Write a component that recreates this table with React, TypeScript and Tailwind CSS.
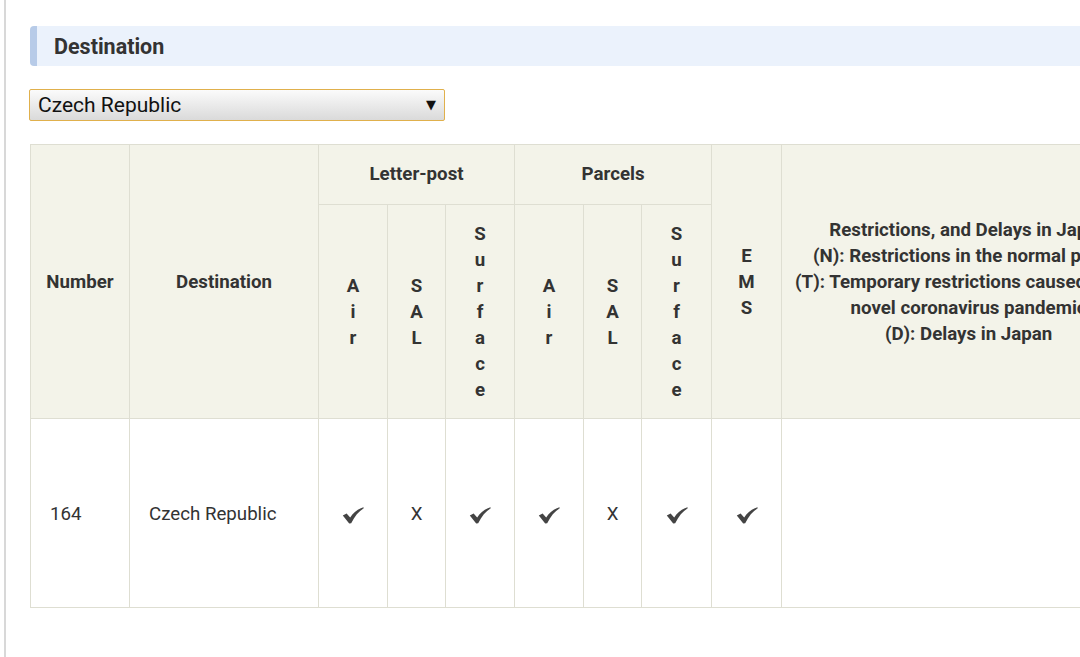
import React from "react";

const Vert = ({ t }: { t: string }) => (
  <div className="flex flex-col items-center leading-[26px]">
    {t.split("").map((c, i) => (
      <span key={i}>{c}</span>
    ))}
  </div>
);

const Check = () => (
  <svg width="22" height="18" viewBox="0 0 22 18" className="inline-block align-middle">
    <path
      d="M0.8 9.6 L4.6 7.4 L8.2 11.6 C11.2 6.8 15.4 3.2 21.4 1.2 L21.8 2.2 C16.6 5.2 12.6 10.2 9.2 17.2 L7.2 17.4 Z"
      fill="#444"
    />
  </svg>
);

const X = () => <span>X</span>;

export default function App() {
  const th = "border border-[#deded2] bg-[#f3f3e9] font-bold text-center align-middle p-0";
  const td = "border border-[#deded2] text-center align-middle p-0 pt-[2px]";
  return (
    <div
      className="w-[1080px] h-[657px] overflow-hidden bg-white flex text-[#333]"
      style={{ fontFamily: 'Roboto, "Noto Sans", sans-serif' }}
    >
      <div className="w-[4px] shrink-0" />
      <div className="w-[2px] shrink-0 bg-[#d8d8d8]" />
      <div className="flex-1 pl-[24px] pt-[26px] min-w-0">
        <div className="h-[40px] w-[1100px] flex items-center bg-[#ebf2fc] border-l-[7px] border-[#b7cbe8] rounded-l-[4px] pl-[17px]">
          <span className="text-[21.5px] font-bold text-[#333] leading-none pt-[2px]">Destination</span>
        </div>
        <div className="mt-[23px] w-[416px] h-[32px] -ml-[1px] border border-[#e0b04c] rounded-[2px] bg-gradient-to-b from-[#fbfbfb] to-[#dadada] flex items-center justify-between pl-[8px] pr-[8px]">
          <span className="text-[21px] text-[#111] pt-[2px]">Czech Republic</span>
          <span className="text-[13px] text-[#111]" style={{ fontFamily: '"DejaVu Sans", sans-serif' }}>▼</span>
        </div>
        <table className="mt-[23px] border-collapse table-fixed w-[1125px] text-[18.7px]">
          <colgroup>
            <col className="w-[99px]" />
            <col className="w-[189px]" />
            <col className="w-[69px]" />
            <col className="w-[58px]" />
            <col className="w-[69px]" />
            <col className="w-[69px]" />
            <col className="w-[58px]" />
            <col className="w-[70px]" />
            <col className="w-[70px]" />
            <col className="w-[374px]" />
          </colgroup>
          <thead>
            <tr className="h-[60px]">
              <th rowSpan={2} className={th + " pt-[2px]"}>Number</th>
              <th rowSpan={2} className={th + " pt-[2px]"}>Destination</th>
              <th colSpan={3} className={th + " pb-[1px]"}>Letter-post</th>
              <th colSpan={3} className={th + " pb-[1px]"}>Parcels</th>
              <th rowSpan={2} className={th}><Vert t="EMS" /></th>
              <th rowSpan={2} className={th + " leading-[26px] px-[10px]"}>
                Restrictions, and Delays in Japan
                <br />
                (N): Restrictions in the normal period
                <br />
                (T): Temporary restrictions caused by the novel coronavirus pandemic
                <br />
                (D): Delays in Japan
              </th>
            </tr>
            <tr className="h-[214px]">
              <th className={th}><Vert t="Air" /></th>
              <th className={th}><Vert t="SAL" /></th>
              <th className={th}><Vert t="Surface" /></th>
              <th className={th}><Vert t="Air" /></th>
              <th className={th}><Vert t="SAL" /></th>
              <th className={th}><Vert t="Surface" /></th>
            </tr>
          </thead>
          <tbody>
            <tr className="h-[189px]">
              <td className={td + " text-left pl-[19px]"}>164</td>
              <td className={td + " text-left pl-[19px]"}>Czech Republic</td>
              <td className={td}><Check /></td>
              <td className={td}><X /></td>
              <td className={td}><Check /></td>
              <td className={td}><Check /></td>
              <td className={td}><X /></td>
              <td className={td}><Check /></td>
              <td className={td}><Check /></td>
              <td className={td}></td>
            </tr>
          </tbody>
        </table>
      </div>
    </div>
  );
}
